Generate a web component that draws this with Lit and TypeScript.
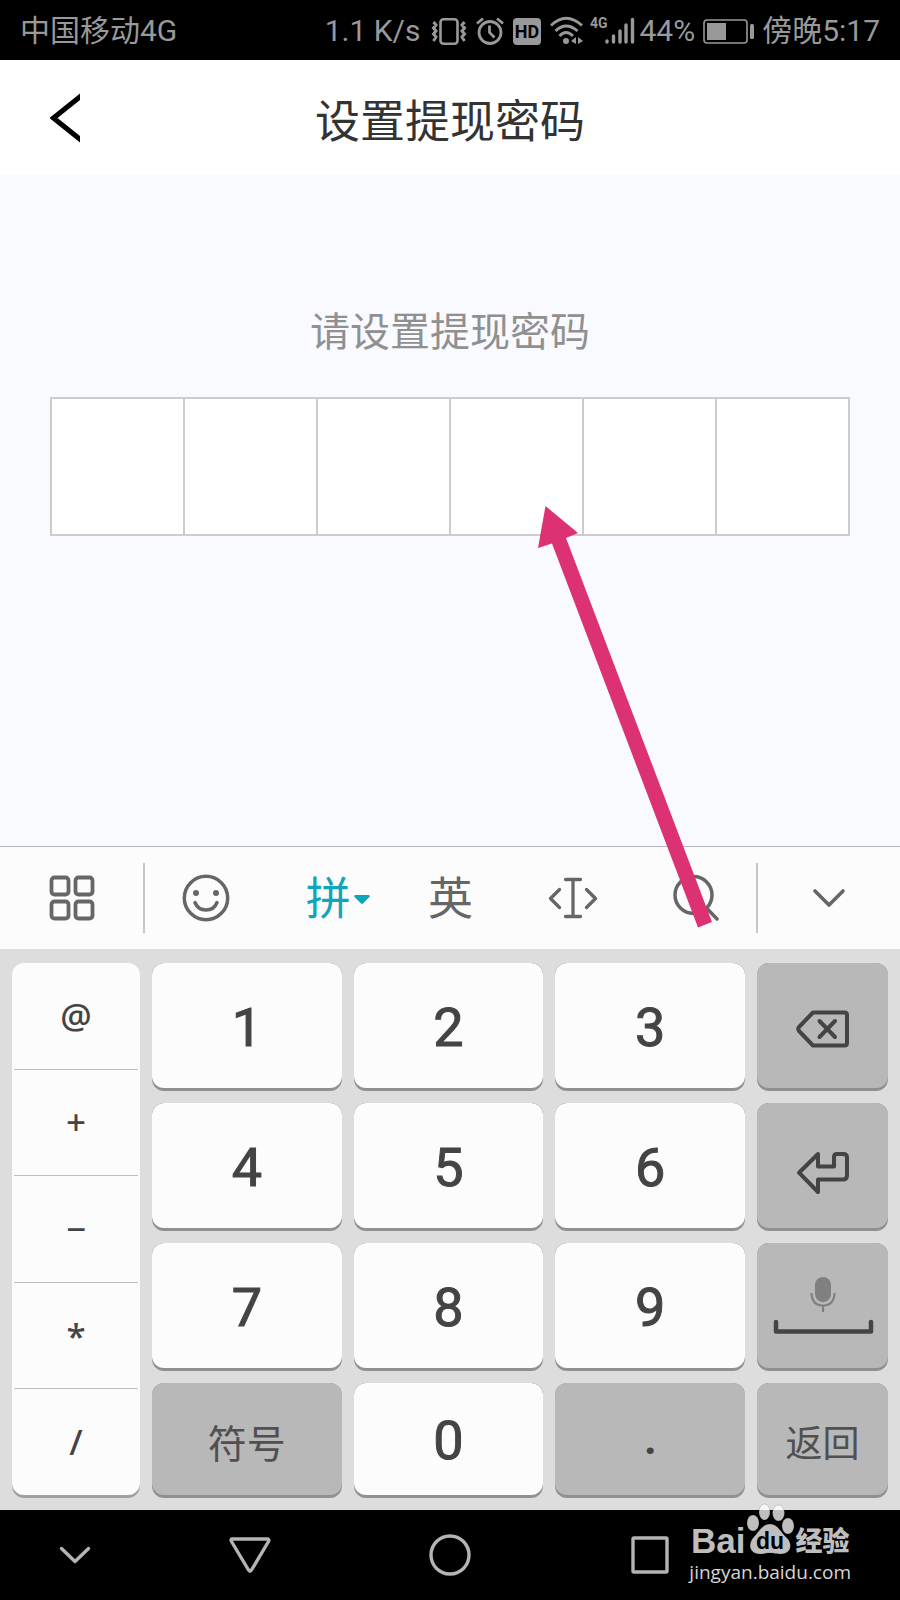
import { LitElement, html, svg, css } from "lit";
import { customElement, state } from "lit/decorators.js";

const SIDE_SYMBOLS = ["@", "+", "−", "*", "/"];

@customElement("status-bar")
class StatusBar extends LitElement {
  static styles = css`
    :host {
      display: flex;
      align-items: center;
      justify-content: space-between;
      box-sizing: border-box;
      height: 60px;
      padding: 2px 20px 0;
      background: #000;
      color: #999;
      font: 30px/58px Roboto, "Noto Sans CJK SC", sans-serif;
      white-space: nowrap;
    }
    .right {
      display: flex;
      align-items: center;
      gap: 8px;
    }
    .icons {
      display: flex;
      align-items: center;
      gap: 9px;
      margin: 0 -4px 0 3px;
    }
    svg {
      display: block;
      fill: none;
      stroke: #999;
      overflow: visible;
    }
    .solid {
      fill: #999;
      stroke: none;
    }
    .tag {
      fill: #000;
      stroke: none;
      font: bold 18px Roboto, sans-serif;
    }
    .net {
      fill: #999;
      stroke: none;
      font: bold 14px Roboto, sans-serif;
    }
  `;

  render() {
    return html`
      <span>中国移动4G</span>
      <div class="right">
        <span>1.1 K/s</span>
        <div class="icons">
          <svg width="36" height="30" viewBox="0 0 36 30" stroke-width="2.6">
            <rect x="9.5" y="3.3" width="17" height="24.5" rx="3" />
            <path
              stroke-width="3"
              d="M2.5 6l2.500 3-2.500 3 2.500 3-2.500 3 2.500 3-2.500 4M33.500 6l-2.500 3 2.500 3-2.500 3 2.500 3-2.500 3 2.500 4"
            />
          </svg>
          <svg width="28" height="30" viewBox="0 0 28 30" stroke-width="2.8">
            <circle cx="14" cy="16.5" r="11" />
            <path d="M13.5 9.5v7l5 5M1 7.5l6-5M27 7.5l-6-5" />
          </svg>
          <svg width="28" height="30" viewBox="0 0 28 30">
            <rect class="solid" x="0" y="2" width="28" height="27" rx="4" />
            <text class="tag" x="14" y="22" text-anchor="middle">HD</text>
          </svg>
          <svg width="34" height="30" viewBox="0 0 34 30" stroke-width="2.8">
            <path d="M1 9.5Q16 -5 32 9.5M5.500 15Q16 5 27.500 15M9.500 20Q16 13 23 20" />
            <circle class="solid" cx="16" cy="25" r="3" />
            <path class="solid" d="M21 25l5-4v7zM33 25l-5-4v7z" />
          </svg>
          <svg width="42" height="30" viewBox="3 0 42 30" stroke-width="3.4" stroke-linecap="round">
            <text class="net" x="0" y="12">4G</text>
            <path d="M17 25v1M23.500 20v6M30 15v11M36 9v17M42.500 3.500v22.500" />
          </svg>
        </div>
        <span>44%</span>
        <svg width="51" height="30" viewBox="0 0 51 30">
          <rect x="1" y="4" width="43" height="23" rx="3" stroke-width="1.600" />
          <rect class="solid" x="4" y="7" width="19" height="17" />
          <rect class="solid" x="47" y="8" width="4" height="15" rx="1.500" />
        </svg>
        <span>傍晚5:17</span>
      </div>
    `;
  }
}

@customElement("input-keyboard")
class InputKeyboard extends LitElement {
  static styles = css`
    :host {
      display: block;
      font-family: Roboto, "Noto Sans CJK SC", sans-serif;
    }
    button {
      display: flex;
      align-items: center;
      justify-content: center;
      min-width: 0;
      margin: 0;
      padding: 0;
      border: 0;
      background: none;
      color: #666;
      font-family: inherit;
    }
    svg {
      display: block;
      fill: none;
      stroke: currentColor;
      stroke-linecap: round;
      stroke-linejoin: round;
    }
    .tools {
      display: grid;
      grid-template-columns: 143px 2px repeat(5, 1fr) 2px 142px;
      height: 102px;
      align-items: center;
      border-top: 1px solid #b6b7c0;
      background: #fcfcfc;
    }
    .tools button {
      height: 100%;
      font-size: 45px;
      line-height: 60px;
    }
    .tools .lang {
      position: relative;
      padding-top: 3px;
    }
    .tools .active {
      color: #11a5b9;
    }
    .rule {
      height: 70px;
      background: #c6c6c6;
    }
    .caret {
      position: absolute;
      left: calc(50% + 26px);
      width: 16px;
      height: 10px;
      fill: currentColor;
      stroke: none;
    }
    .keys {
      display: grid;
      grid-template-columns: 128px repeat(3, 1fr) 131px;
      grid-template-rows: repeat(3, 128px) 115px;
      gap: 12px;
      padding: 14px 12px 12px;
      background: #ddd;
    }
    .key {
      align-items: stretch;
      padding-bottom: 3px;
      border-radius: 12px;
      background: #909090;
      color: #444;
      font-size: 54px;
      overflow: hidden;
    }
    .cap {
      display: flex;
      flex: 1;
      align-items: center;
      justify-content: center;
      min-width: 0;
      border-radius: 12px;
      background: #fcfcfc;
    }
    .grey .cap {
      background: #b8b8b8;
    }
    .digit {
      -webkit-text-stroke: 1px #444;
    }
    .digit .cap,
    .word .cap {
      padding-top: 3px;
    }
    .word {
      color: #505050;
      font: 39px/50px "Noto Sans CJK SC", sans-serif;
    }
    .small {
      font-size: 37px;
    }
    .dot {
      font: bold 40px/50px "Open Sans", sans-serif;
    }
    .side {
      grid-row: 1 / 5;
      display: flex;
      flex-direction: column;
      padding: 0 2px 3px;
      border-radius: 12px;
      background: #fcfcfc;
      box-shadow: inset 0 -3px #a0a0a0;
    }
    .side button {
      flex: 1;
      color: #444;
      font: 500 35px/44px "Noto Sans", sans-serif;
    }
    .side button + button {
      border-top: 1px solid #bdbdbd;
    }
    .mic {
      fill: #808080;
      stroke: none;
    }
    .stand {
      stroke: #808080;
    }
  `;

  private key(label: unknown, kind = "digit", name = "") {
    return html`<button class="key ${kind}" aria-label=${name || String(label)}>
      <span class="cap">${label}</span>
    </button>`;
  }

  private keyIcon(shape: unknown) {
    return html`<svg width="131" height="125" viewBox="0 0 131 125" stroke-width="4">
      ${shape}
    </svg>`;
  }

  render() {
    const backspace = this.keyIcon(svg`
      <path d="M56 49.500H87.500Q90 49.500 90 52V80Q90 82.500 87.500 82.500H56L42 68Q40.500 66 42 64Z" />
      <path d="M62.500 58l15.500 16M78 58L62.500 74" />`);
    const enter = this.keyIcon(svg`
      <path d="M61 51L42 69.700L61 89V76.500H86Q90 76.500 90 72.500V54.500Q90 51 86.500 51H80Q77 51 77 54V63.500H61Z" />`);
    const space = this.keyIcon(svg`
      <rect class="mic" x="58" y="34" width="16" height="25" rx="8" />
      <path class="stand" stroke-width="2.200" stroke-linecap="butt" d="M54.500 50Q55 62.500 66 62.500Q77 62.500 77.500 50M66 62.500V69" />
      <path stroke-width="4.500" d="M19 79V88.500H114V79" />`);

    return html`
      <div class="tools">
        <button aria-label="菜单">
          <svg width="46" height="46" viewBox="0 0 46 46" stroke-width="3.800">
            <rect x="2.500" y="2.500" width="17" height="17" rx="3" />
            <rect x="26.500" y="2.500" width="17" height="17" rx="3" />
            <rect x="2.500" y="26.500" width="17" height="17" rx="3" />
            <rect x="26.500" y="26.500" width="17" height="17" rx="3" />
          </svg>
        </button>
        <span class="rule"></span>
        <button aria-label="表情">
          <svg width="48" height="48" viewBox="0 0 48 48" stroke-width="3.500">
            <circle cx="24" cy="24" r="21.700" />
            <circle cx="14" cy="19" r="3" fill="currentColor" stroke="none" />
            <circle cx="34" cy="19" r="3" fill="currentColor" stroke="none" />
            <path d="M13 28.500Q16 36 24 36Q32 36 35 28.500" />
          </svg>
        </button>
        <button class="lang active">
          拼<svg class="caret" viewBox="0 0 16 10"><path d="M1 0h14q1.500 1 0 2.500L9 8.500q-1 .8-2 0L1 2.500Q-.5 1 1 0z" /></svg>
        </button>
        <button class="lang">英</button>
        <button aria-label="光标">
          <svg width="50" height="44" viewBox="0 0 50 44" stroke-width="3.300">
            <path d="M17.500 3.500h15M17.500 40.500h15M25 3.500v37M11.500 13.500L2.500 22.500l9 9M38.500 13.500l9 9-9 9" />
          </svg>
        </button>
        <button aria-label="搜索">
          <svg width="48" height="48" viewBox="0 0 48 48" stroke-width="3.500">
            <circle cx="22.500" cy="21" r="18.500" />
            <path d="M35.500 34l10.500 11" />
          </svg>
        </button>
        <span class="rule"></span>
        <button aria-label="收起">
          <svg width="34" height="20" viewBox="0 0 34 20" stroke-width="3.600">
            <path d="M3 3l14 14L31 3" />
          </svg>
        </button>
      </div>
      <div class="keys">
        <div class="side">
          ${SIDE_SYMBOLS.map((s) => html`<button>${s}</button>`)}
        </div>
        ${this.key("1")} ${this.key("2")} ${this.key("3")}
        ${this.key(backspace, "grey", "删除")}
        ${this.key("4")} ${this.key("5")} ${this.key("6")}
        ${this.key(enter, "grey", "换行")}
        ${this.key("7")} ${this.key("8")} ${this.key("9")}
        ${this.key(space, "grey", "空格")}
        ${this.key("符号", "grey word")} ${this.key("0")}
        ${this.key(".", "grey dot")} ${this.key("返回", "grey word small")}
      </div>
    `;
  }
}

@customElement("app-root")
class AppRoot extends LitElement {
  @state() private cells = Array.from({ length: 6 }, (_, i) => i);

  static styles = css`
    :host {
      position: relative;
      display: flex;
      flex-direction: column;
      min-height: 100vh;
      background: #f9faff;
      font-family: "Noto Sans CJK SC", sans-serif;
    }
    .title-bar {
      display: grid;
      grid-template-columns: 80px 1fr 80px;
      align-items: center;
      height: 115px;
      background: #fff;
    }
    .back {
      display: flex;
      justify-content: flex-end;
      padding: 0;
      border: 0;
      background: none;
    }
    .back svg {
      fill: none;
      stroke: #000;
      stroke-width: 5;
    }
    h1 {
      margin: 0;
      padding-top: 2px;
      color: #333;
      font-size: 45px;
      font-weight: 400;
      line-height: 60px;
      text-align: center;
    }
    .form {
      flex: 1;
      padding: 124px 50px 60px;
    }
    .prompt {
      display: block;
      margin-bottom: 38px;
      color: #909090;
      font-size: 40px;
      line-height: 60px;
      text-align: center;
    }
    .pin {
      display: grid;
      grid-template-columns: repeat(6, 1fr);
      gap: 2px;
      height: 135px;
      padding: 2px;
      background: #ccc;
    }
    .pin input {
      min-width: 0;
      padding: 0;
      border: 0;
      border-radius: 0;
      outline: 0;
      background: #fff;
      font-size: 48px;
      text-align: center;
    }
    .nav {
      display: grid;
      grid-template-columns: 150px repeat(3, 1fr) 150px;
      height: 90px;
      background: #000;
    }
    .nav button {
      display: flex;
      align-items: center;
      justify-content: center;
      padding: 0;
      border: 0;
      background: none;
    }
    .nav svg {
      fill: none;
      stroke: #b4b4b4;
      stroke-width: 3.4;
      stroke-linecap: round;
      stroke-linejoin: round;
    }
    .arrow {
      position: absolute;
      left: calc(50% + 88px);
      top: 506px;
      width: 175px;
      height: 422px;
      fill: #dc3274;
      pointer-events: none;
    }
    .mark {
      position: absolute;
      right: 49px;
      bottom: 16px;
      display: flex;
      flex-direction: column;
      align-items: center;
      gap: 3px;
      color: #bebebe;
      text-decoration: none;
    }
    .brand {
      display: flex;
      align-items: flex-end;
      font: bold 35px/32px "Liberation Sans", sans-serif;
    }
    .brand svg {
      width: 50px;
      height: 54px;
    }
    .paw {
      fill: rgba(255, 255, 255, 0.75);
      stroke: rgba(0, 0, 0, 0.15);
    }
    .du {
      font: bold 23px "Liberation Sans", sans-serif;
      fill: #000;
    }
    .jy {
      font: 900 27px/34px "Noto Sans CJK SC", sans-serif;
    }
    .url {
      color: #d6d6d6;
      font: 19px/24px "Open Sans", sans-serif;
    }
  `;

  render() {
    return html`
      <status-bar></status-bar>
      <header class="title-bar">
        <button class="back" aria-label="返回">
          <svg width="30" height="50" viewBox="0 0 30 50">
            <path d="M34 0.500L3.500 25L34 49.500" />
          </svg>
        </button>
        <h1>设置提现密码</h1>
      </header>
      <main class="form">
        <label class="prompt" for="pin-0">请设置提现密码</label>
        <div class="pin">
          ${this.cells.map(
            (i) => html`<input
              id="pin-${i}"
              type="password"
              inputmode="numeric"
              maxlength="1"
              aria-label="密码第${i + 1}位"
            />`
          )}
        </div>
      </main>
      <input-keyboard></input-keyboard>
      <nav class="nav">
        <button aria-label="隐藏键盘">
          <svg width="32" height="18" viewBox="0 0 32 18"><path d="M2.500 2.500L16 15.500L29.500 2.500" /></svg>
        </button>
        <button aria-label="后退">
          <svg width="42" height="38" viewBox="0 0 42 38">
            <path d="M3 3Q1.500 3 2.500 5.500L19.500 34Q21 36.500 22.500 34L39.500 5.500Q40.500 3 38.500 3Z" />
          </svg>
        </button>
        <button aria-label="主页">
          <svg width="42" height="42" viewBox="0 0 42 42"><circle cx="21" cy="21" r="19" /></svg>
        </button>
        <button aria-label="最近任务">
          <svg width="38" height="38" viewBox="0 0 38 38"><rect x="2" y="2" width="34" height="34" rx="1" /></svg>
        </button>
      </nav>
      <svg class="arrow" viewBox="0 0 175 422" aria-hidden="true">
        <path d="M7.500 0L40 27L28 32L174 416L160 421.500L14 37.500L0 42Z" />
      </svg>
      <a class="mark" href="#">
        <span class="brand">
          Bai<svg viewBox="0 0 50 54">
            <g class="paw">
              <ellipse cx="8" cy="20" rx="6" ry="8" />
              <ellipse cx="19.500" cy="9" rx="5.500" ry="8" />
              <ellipse cx="33.500" cy="10" rx="6" ry="8" />
              <ellipse cx="43" cy="23" rx="6" ry="8" />
              <path d="M25 21C33 21 36 30 42 35C48 41 46 51 36 51C31 51 29 50 25 50C21 50 19 51 15 51C4 51 3 41 8 35C13 30 17 21 25 21Z" />
            </g>
            <text class="du" x="25" y="46" text-anchor="middle">du</text>
          </svg><span class="jy">经验</span>
        </span>
        <span class="url">jingyan.baidu.com</span>
      </a>
    `;
  }
}
